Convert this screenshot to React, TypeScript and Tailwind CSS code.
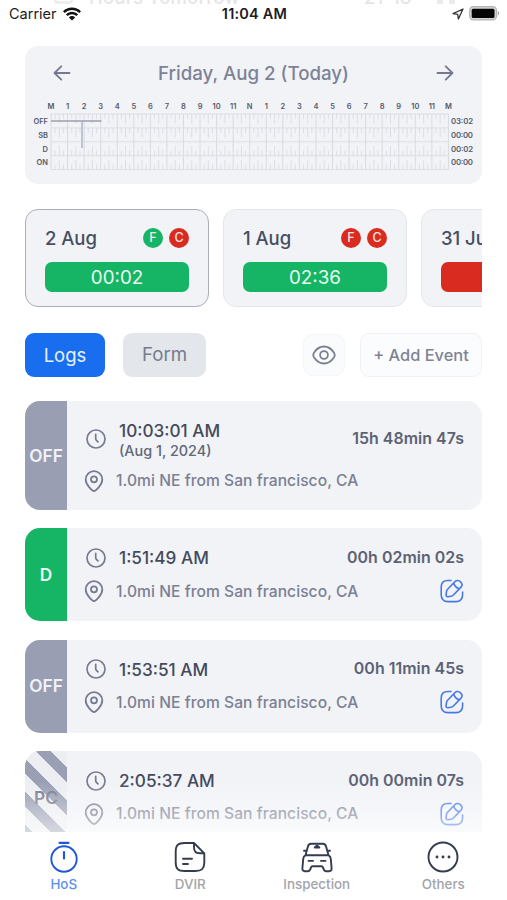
import React from "react";

const hours = ["M", "1", "2", "3", "4", "5", "6", "7", "8", "9", "10", "11", "N", "1", "2", "3", "4", "5", "6", "7", "8", "9", "10", "11", "M"];
const rows = [
  { label: "OFF", total: "03:02" },
  { label: "SB", total: "00:00" },
  { label: "D", total: "00:02" },
  { label: "ON", total: "00:00" },
];

function DutyChart() {
  const left = 26;
  const step = 16.56;
  const top = 20;
  const rowH = 13.9;
  const ticks: React.ReactNode[] = [];
  rows.forEach((_, r) => {
    for (let h = 0; h < 24; h++) {
      [1, 2, 3].forEach((q) => {
        const x = left + step * (h + q / 4);
        const len = q === 2 ? 9.5 : 5;
        const y = r < 2 ? top + rowH * r : top + rowH * (r + 1) - len;
        ticks.push(<line key={`${r}-${h}-${q}`} x1={x} x2={x} y1={y} y2={y + len} stroke="#d3d6dd" strokeWidth="0.7" />);
      });
    }
  });
  return (
    <svg className="block h-[90px] w-[457px]" viewBox="0 0 457 90" fontFamily="Inter, sans-serif">
      {hours.map((h, i) => (
        <text key={i} x={left + step * i} y="15.3" textAnchor="middle" fontSize="7.5" fontWeight="600" fill="#555a69">{h}</text>
      ))}
      {ticks}
      {hours.map((_, i) => (
        <line key={i} x1={left + step * i} x2={left + step * i} y1={top} y2={top + rowH * 4} stroke="#d6d8df" strokeWidth="0.9" />
      ))}
      {[0, 1, 2, 3, 4].map((i) => (
        <line key={i} x1={left} x2={left + step * 24} y1={top + rowH * i} y2={top + rowH * i} stroke="#d9dbe1" strokeWidth="0.9" />
      ))}
      {rows.map((r, i) => (
        <g key={r.label} fontSize="7.5" fontWeight="600" fill="#555a69">
          <text x="23" y={top + rowH * (i + 0.5) + 2.8} textAnchor="end">{r.label}</text>
          <text x="426" y={top + rowH * (i + 0.5) + 2.8} textLength="22" fontSize="7.8">{r.total}</text>
        </g>
      ))}
      <rect x="56" y="27.5" width="2" height="26.5" fill="#bcc4d6" />
      <line x1={left} x2="76.5" y1="27" y2="27" stroke="#9c9faa" strokeWidth="1.5" />
    </svg>
  );
}

function Arrow({ flip = false }: { flip?: boolean }) {
  return (
    <svg className={flip ? "size-5 rotate-180" : "size-5"} viewBox="0 0 20 20" fill="none" stroke="#747990" strokeWidth="1.8" strokeLinecap="round" strokeLinejoin="round">
      <path d="M17.5 10H2.700M9.300 3.300 2.500 10l6.800 6.700" />
    </svg>
  );
}

function Dot({ letter, green = false }: { letter: string; green?: boolean }) {
  return (
    <span className={`flex size-5 items-center justify-center rounded-full pt-px text-[12.5px] leading-none font-medium text-[#fbe5e2] ${green ? "bg-[#15b565]" : "bg-[#d92b20]"}`}>
      {letter}
    </span>
  );
}

function DayCard({ day, time, active = false, green = false, bar = "bg-[#15b565]" }: { day: string; time: string; active?: boolean; green?: boolean; bar?: string }) {
  return (
    <div className={`h-[98px] w-[184px] shrink-0 rounded-[13px] border bg-[#f1f3f7] px-[19px] pt-[17px] ${active ? "border-[#a9adbc]" : "border-[#e3e6ea]"}`}>
      <div className="flex h-[21px] items-center justify-between">
        <span className="whitespace-nowrap pt-[2px] text-[18.5px] font-[450] tracking-[-0.05px] text-[#484d60]">{day}</span>
        <span className="flex gap-[6px]">
          <Dot letter="F" green={green} />
          <Dot letter="C" />
        </span>
      </div>
      <div className={`mt-[14px] flex h-[30px] items-center justify-center rounded-[7px] pt-[2px] text-[18.8px] text-[#e9fbf1] ${bar}`}>{time}</div>
    </div>
  );
}

function Clock() {
  return (
    <svg className="size-5" viewBox="0 0 20 20" fill="none" stroke="#767b8f" strokeWidth="1.7" strokeLinecap="round" strokeLinejoin="round">
      <circle cx="10" cy="10" r="9" />
      <path d="M9.700 5.300v4.300c0 .7.200 1.200.7 1.700l1.600 1.600" />
    </svg>
  );
}

function Pin() {
  return (
    <svg className="h-[22px] w-5" viewBox="0 0 20 22" fill="none" stroke="#767b8f" strokeWidth="1.8" strokeLinejoin="round">
      <path d="M10 21c-1.400 0-8.300-6-8.300-11.500a8.300 8.300 0 0 1 16.600 0C18.300 15 11.400 21 10 21Z" />
      <circle cx="10" cy="9.300" r="3" />
    </svg>
  );
}

function Edit() {
  return (
    <svg className="size-6" viewBox="0 0 24 24" fill="none" stroke="#4778e8" strokeWidth="1.6" strokeLinecap="round" strokeLinejoin="round">
      <path d="M11 1.500H8C3.300 1.500 1.200 3.600 1.200 8.300v7.500c0 4.700 2.100 6.800 6.800 6.800h7.800c4.700 0 6.800-2.100 6.800-6.800V13" />
      <path d="m14.800 2.800-7.200 7.500c-.7.700-1 1.400-1.100 2.300l-.4 3.300c-.1 1.200.6 1.900 1.700 1.800l3.300-.5c.9-.1 1.600-.5 2.300-1.200l7.400-7.600c1.700-1.700 1.900-3.300 0-5.300-2-2-4.300-2-6-.3ZM13.700 4c.7 2.800 2.700 4.900 5.700 5.800" />
    </svg>
  );
}

type LogProps = { code: string; time: string; sub?: string; duration: string; striped?: boolean };

function LogCard({ code, time, sub, duration, striped = false }: LogProps) {
  const tone = striped
    ? "text-[#777b8b] bg-[repeating-linear-gradient(45deg,#eceef2_0px,#eceef2_2.800px,#9a9fb4_2.800px,#9a9fb4_13.800px,#eceef2_13.800px,#eceef2_23.400px)]"
    : code === "D"
      ? "bg-[#15b565] text-[#e8fcef]"
      : "bg-[#999eb3] text-[#f0f2f8]";
  return (
    <div className={`flex shrink-0 overflow-hidden rounded-[15px] bg-[#f1f3f7] ${sub ? "h-[109px]" : "h-[93px]"}`}>
      <div className={`flex w-[42px] shrink-0 items-center justify-center text-[17.300px] font-semibold ${tone}`}>{code}</div>
      <div className="flex flex-1 flex-col pr-[18px] pl-[17px]">
        <div className={`flex items-center ${sub ? "h-[76px]" : "h-[59px]"}`}>
          <div className="ml-[2px] flex w-[33px]"><Clock /></div>
          <div className={`flex-1 whitespace-nowrap text-[17.200px] text-[#444a5c] ${sub ? "pt-[3px]" : ""}`}>
            <div className="leading-[21px] font-medium">{time}</div>
            {sub && <div className="text-[14.400px] leading-[20px] font-[450] text-[#636877]">{sub}</div>}
          </div>
          <div className="whitespace-nowrap text-[15.900px] font-semibold tracking-[0.040px] text-[#5c6274]">{duration}</div>
        </div>
        <div className="flex h-[7px] items-center">
          <div className="w-[32px]"><Pin /></div>
          <div className="flex-1 whitespace-nowrap pt-px text-[15.600px] font-medium tracking-[0.060px] text-[#7b8093]">1.0mi NE from San francisco, CA</div>
          {!sub && <Edit />}
        </div>
      </div>
    </div>
  );
}

function Tab({ label, active = false, children }: { label: string; active?: boolean; children: React.ReactNode }) {
  return (
    <div className="flex w-[126.500px] flex-col items-center pt-[9px]">
      <svg className="size-8" viewBox="0 0 32 32" fill="none" stroke={active ? "#1f57d8" : "#353b50"} strokeWidth="1.900" strokeLinecap="round" strokeLinejoin="round">{children}</svg>
      <span className={`mt-[3px] text-[13.400px] leading-[16px] font-medium ${active ? "text-[#5c8ff2]" : "text-[#a2a4aa]"}`}>{label}</span>
    </div>
  );
}

export default function App() {
  return (
    <div className="relative flex h-[900px] w-[507px] flex-col overflow-hidden bg-white font-[Inter,sans-serif]">
      <div className="absolute inset-x-0 -top-[12px] h-6 text-[18.500px] leading-6 font-medium text-[#d9dadd]">
        <span className="absolute top-[2px] left-[54px] h-[14px] w-[19px] rounded-[3px] border-[3px] border-[#e7e7ea]" />
        <span className="absolute -top-[3px] left-[89px] tracking-[0.200px]">Hours Tomorrow</span>
        <span className="absolute -top-[3px] left-[364px]">21</span>
        <span className="absolute -top-[3px] left-[392px]">18</span>
        <span className="absolute top-[12px] left-[437px] h-[4px] w-[6px] bg-[#e2e2e5]" />
        <span className="absolute top-[12px] left-[449px] h-[4px] w-[6px] bg-[#e2e2e5]" />
      </div>
      <header className="relative flex h-[46px] shrink-0 items-start justify-between bg-white/30 pt-[5px] pr-[7px] pl-[9px] text-[14.500px] leading-[18px] text-[#1c1c1e]">
        <div className="flex w-[160px] items-center gap-[6px]">
          <span>Carrier</span>
          <svg className="h-[14px] w-[18px]" viewBox="0 0 18 14" fill="none" stroke="#111" strokeWidth="2.500">
            <path d="M.8 5.100a11.700 11.700 0 0 1 16.400 0M3.700 8.200a7.600 7.600 0 0 1 10.600 0" />
            <path d="M9 13.500 5.900 10.400a4.400 4.400 0 0 1 6.200 0Z" fill="#111" stroke="none" />
          </svg>
        </div>
        <span className="text-[14.500px] font-semibold tracking-[0.200px]">11:04 AM</span>
        <div className="flex w-[160px] items-center justify-end gap-[5px] pt-px">
          <svg className="size-3" viewBox="0 0 12 12" fill="none" stroke="#333" strokeWidth="1.300" strokeLinejoin="round"><path d="M11 1 1 5.600l4.700.7.700 4.700Z" /></svg>
          <svg className="h-[15px] w-[31px]" viewBox="0 0 31 15">
            <rect x=".7" y=".7" width="26.800" height="13.200" rx="3.600" fill="#d4d4d4" stroke="#b5b5b5" strokeWidth="1.200" />
            <rect x="2.700" y="2.700" width="22.800" height="9.200" rx="1.500" fill="#050505" />
            <path d="M28.700 5c2 .7 2 4 0 4.700Z" fill="#aaa" />
          </svg>
        </div>
      </header>

      <main className="flex min-h-0 flex-1 flex-col px-[25px]">
        <section className="h-[138px] shrink-0 rounded-[13px] bg-[#f1f3f7]">
          <div className="flex h-[48px] items-center justify-between px-[27px] pt-[6px]">
            <Arrow />
            <h1 className="pt-[2px] text-[18.700px] font-[450] text-[#7d8296]">Friday, Aug 2 (Today)</h1>
            <Arrow flip />
          </div>
          <DutyChart />
        </section>

        <section className="mt-[25px] flex shrink-0 gap-[14px] overflow-hidden">
          <DayCard day="2 Aug" time="00:02" active green />
          <DayCard day="1 Aug" time="02:36" />
          <DayCard day="31 Jul" time="" bar="bg-[#d92b20]" />
        </section>

        <section className="mt-[26px] flex h-[44px] shrink-0 items-center">
          <button className="h-full w-[80px] rounded-[9px] bg-[#186eee] pt-px text-[18.500px] text-[#e8f1ff]">Logs</button>
          <button className="ml-[18px] h-full w-[83px] rounded-[9px] bg-[#e3e6eb] pt-px text-[18.700px] text-[#777c8b]">Form</button>
          <button className="ml-auto flex size-[42px] items-center justify-center rounded-[10px] border border-[#f3f5f7] bg-[#fafbfc]">
            <svg className="h-[20px] w-6" viewBox="0 0 24 20" fill="none" stroke="#7b8090" strokeWidth="1.800">
              <path d="M12 1.500c-4.300 0-7.600 2.600-9.900 6-.9 1.400-.9 3.600 0 5 2.300 3.400 5.600 6 9.900 6s7.600-2.600 9.900-6c.9-1.400.9-3.600 0-5-2.300-3.400-5.600-6-9.900-6Z" />
              <circle cx="12" cy="10" r="3.900" />
            </svg>
          </button>
          <button className="ml-[15px] h-full w-[122px] rounded-[9px] border border-[#f0f2f5] bg-[#fbfcfd] text-[16.400px] font-[450] whitespace-nowrap text-[#7f8494]">+ Add Event</button>
        </section>

        <section className="mt-[24px] flex min-h-0 flex-1 flex-col gap-[18.400px] overflow-hidden">
          <LogCard code="OFF" time="10:03:01 AM" sub="(Aug 1, 2024)" duration="15h 48min 47s" />
          <LogCard code="D" time="1:51:49 AM" duration="00h 02min 02s" />
          <LogCard code="OFF" time="1:53:51 AM" duration="00h 11min 45s" />
          <LogCard code="PC" time="2:05:37 AM" duration="00h 00min 07s" striped />
        </section>
      </main>

      <div className="pointer-events-none absolute inset-x-0 top-[782px] h-[50px] bg-linear-to-b from-white/0 to-white/60" />
      <nav className="relative flex h-[68px] shrink-0 bg-white pl-[0.500px]">
        <Tab label="HoS" active>
          <circle cx="16" cy="18" r="12.700" />
          <path d="M11.500 1.800h9M16 11v6.500" strokeWidth="2.200" />
        </Tab>
        <Tab label="DVIR">
          <path d="M20 2H10.500C4 2 1.700 4.300 1.700 10.500v11c0 6.200 2.300 8.500 8.800 8.500h11c6.200 0 8.800-2.300 8.800-8.500V12.300L20 2Zm0 0v4.500c0 4 1.800 5.800 5.800 5.800h4.500M9 17.700h9M9 23h5" />
        </Tab>
        <Tab label="Inspection">
          <path d="M4.500 14.300 7 5.300C7.500 3.400 8.300 2.700 10.300 2.700h11.400c2 0 2.800.7 3.300 2.600l2.500 9M4.500 14.300h23c1.500.6 2.100 1.700 2.300 3.500l.8 9.700c.1 1.700-.7 2.700-2.400 2.700H25c-1.300 0-1.900-.6-2.300-1.800l-.6-1.800c-.3-.9-.8-1.300-1.800-1.300h-8.600c-1 0-1.500.4-1.800 1.300l-.6 1.800c-.4 1.200-1 1.800-2.300 1.800H3.800c-1.700 0-2.500-1-2.400-2.700l.8-9.700c.2-1.800.8-2.900 2.300-3.500ZM3 9.700h2.500M26.500 9.700H29M7.500 19.900H12M20 19.900h4.500" />
          <path d="M13.700 6.500h4.600L16 4.500Z" fill="#353b50" />
        </Tab>
        <Tab label="Others">
          <circle cx="16" cy="16" r="14.500" />
          <path d="M10 16h.01M16 16h.01M22 16h.01" strokeWidth="2.900" />
        </Tab>
      </nav>
    </div>
  );
}
